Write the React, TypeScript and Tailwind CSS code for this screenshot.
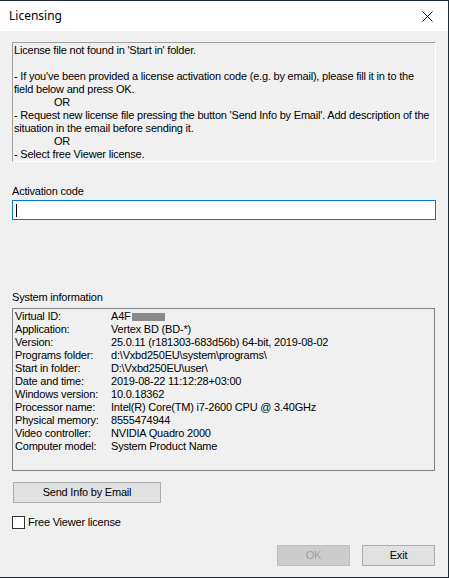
import React from "react";

const rows: [string, string][] = [
  ["Virtual ID:", "A4F"],
  ["Application:", "Vertex BD (BD-*)"],
  ["Version:", "25.0.11 (r181303-683d56b) 64-bit, 2019-08-02"],
  ["Programs folder:", "d:\\Vxbd250EU\\system\\programs\\"],
  ["Start in folder:", "D:\\Vxbd250EU\\user\\"],
  ["Date and time:", "2019-08-22 11:12:28+03:00"],
  ["Windows version:", "10.0.18362"],
  ["Processor name:", "Intel(R) Core(TM) i7-2600 CPU @ 3.40GHz"],
  ["Physical memory:", "8555474944"],
  ["Video controller:", "NVIDIA Quadro 2000"],
  ["Computer model:", "System Product Name"],
];

const ui = "font-['Liberation_Sans',Arial,sans-serif] text-[11px] tracking-[-0.2px] text-black";

export default function App() {
  return (
    <div className="w-[449px] h-[578px] bg-[#1b2a38] overflow-hidden">
      <div className="mt-px w-[448px] h-[576px] bg-[#f0f0f0] flex flex-col">
        {/* title bar */}
        <div className="h-[30px] bg-white flex items-center justify-between pl-[9px] pr-[11px]">
          <span className="font-['Noto_Sans',sans-serif] text-[12px] text-black leading-none">Licensing</span>
          <svg width="11" height="11" viewBox="0 0 11 11" className="mr-[4px]">
            <path d="M0.5 0.5 L10.5 10.5 M10.5 0.5 L0.5 10.5" stroke="#111" strokeWidth="1" />
          </svg>
        </div>

        <div className={`px-[12px] flex flex-col ${ui}`}>
          {/* message box */}
          <div className="mt-[11px] h-[120px] w-[424px] border-t border-l border-[#a0a0a0] border-b border-r border-b-white border-r-white pl-[1px] pt-[1px] leading-[13px]">
            <div>License file not found in 'Start in' folder.</div>
            <div>&nbsp;</div>
            <div>- If you've been provided a license activation code (e.g. by email), please fill it in to the</div>
            <div>field below and press OK.</div>
            <div className="pl-[40px]">OR</div>
            <div>- Request new license file pressing the button 'Send Info by Email'. Add description of the</div>
            <div>situation in the email before sending it.</div>
            <div className="pl-[40px]">OR</div>
            <div>- Select free Viewer license.</div>
          </div>

          {/* activation code */}
          <div className="mt-[23px] leading-[13px]">Activation code</div>
          <div className="mt-[2px] h-[20px] w-[424px] bg-white border border-[#0078d7] flex items-center pl-[3px]">
            <div className="w-px h-[13px] bg-black" />
          </div>

          {/* system information */}
          <div className="mt-[71px] leading-[13px]">System information</div>
          <div className="mt-[4px] h-[163px] w-[423px] border border-[#828282] pl-[2px] pt-[1px] leading-[13px]">
            {rows.map(([k, v]) => (
              <div key={k} className="flex">
                <span className="w-[96px] shrink-0">{k}</span>
                <span className="flex items-center">
                  {v}
                  {k === "Virtual ID:" && <span className="inline-block w-[33px] h-[8px] bg-[#8a8a8a] ml-px" />}
                </span>
              </div>
            ))}
          </div>

          {/* email button */}
          <button className="mt-[11px] ml-px w-[148px] h-[21px] bg-[#e1e1e1] border border-[#adadad] leading-none">
            Send Info by Email
          </button>

          {/* viewer checkbox */}
          <div className="mt-[13px] flex items-center gap-[3px]">
            <div className="w-[13px] h-[13px] bg-white border border-[#333333]" />
            <span className="leading-[13px]">Free Viewer license</span>
          </div>

          {/* dialog buttons */}
          <div className="mt-[16px] flex justify-end gap-[12px] pr-[1px]">
            <button className="w-[73px] h-[21px] bg-[#cccccc] border border-[#bfbfbf] text-[#a0a0a0] leading-none">OK</button>
            <button className="w-[73px] h-[21px] bg-[#e1e1e1] border border-[#adadad] leading-none">Exit</button>
          </div>
        </div>
      </div>
    </div>
  );
}
